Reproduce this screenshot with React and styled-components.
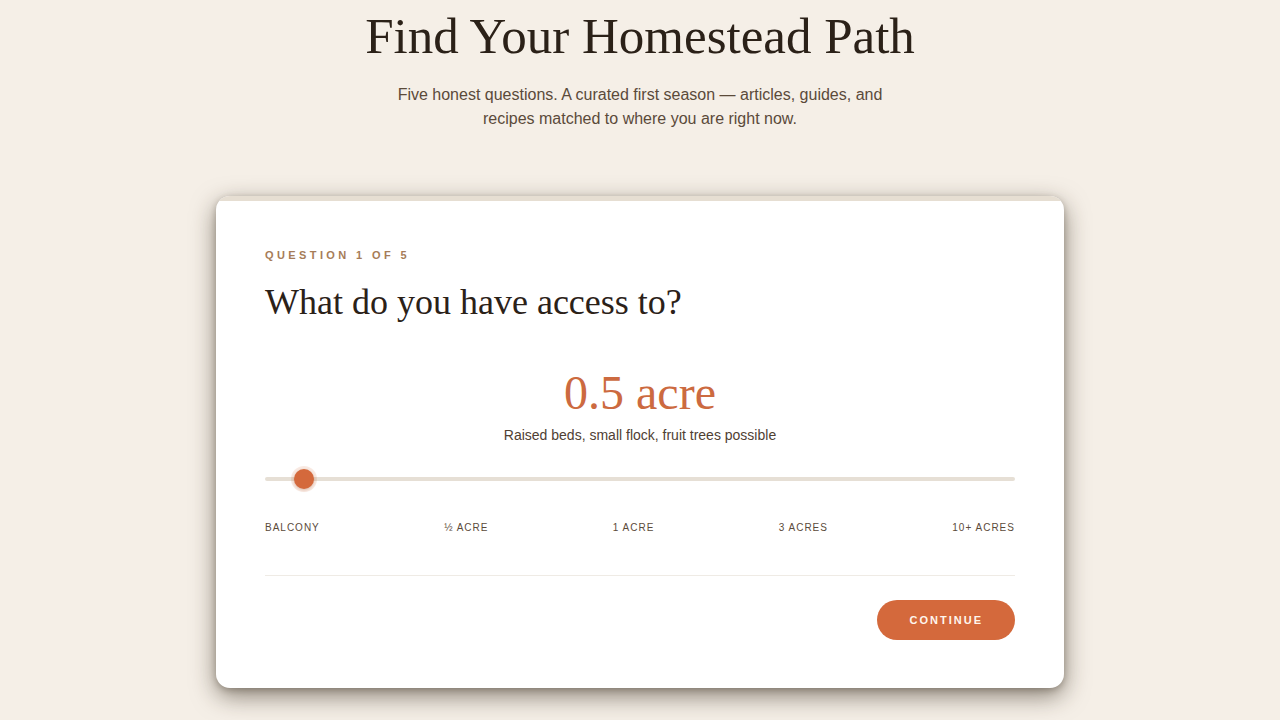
import React, { useState } from 'react';
import styled, { createGlobalStyle } from 'styled-components';

const GlobalStyle = createGlobalStyle`
  * { box-sizing: border-box; }
  body {
    margin: 0;
    background: #f5efe7;
    color: #2b231b;
    font-family: 'Liberation Sans', Arial, sans-serif;
  }
`;

const stops = ['Balcony', '½ acre', '1 acre', '3 acres', '10+ acres'];

const App = () => {
  const [value] = useState(0.052);

  return (
    <>
      <GlobalStyle />
      <Page>
        <Title>Find Your Homestead Path</Title>
        <Intro>
          Five honest questions. A curated first season — articles, guides, and recipes matched to where you
          are right now.
        </Intro>

        <Card>
          <Progress>
            <ProgressFill style={{ width: '0%' }} />
          </Progress>
          <CardBody>
            <Eyebrow>Question 1 of 5</Eyebrow>
            <Question>What do you have access to?</Question>

            <Readout>
              <Amount>0.5 acre</Amount>
              <Hint>Raised beds, small flock, fruit trees possible</Hint>
            </Readout>

            <Track>
              <Thumb style={{ left: `${value * 100}%` }} />
            </Track>

            <Stops>
              {stops.map((s) => (
                <Stop key={s}>{s}</Stop>
              ))}
            </Stops>

            <Footer>
              <ContinueButton>Continue</ContinueButton>
            </Footer>
          </CardBody>
        </Card>
      </Page>
    </>
  );
};

export default App;

const Page = styled.div`
  display: flex;
  flex-direction: column;
  align-items: center;
  padding: 6px 20px 40px;
`;

const Title = styled.h1`
  margin: 0;
  font-family: 'Liberation Serif', 'Times New Roman', serif;
  font-weight: 400;
  font-size: 51px;
  line-height: 1.2;
  color: #2b2118;
`;

const Intro = styled.p`
  margin: 16px 0 0;
  max-width: 500px;
  text-align: center;
  font-size: 16px;
  line-height: 24px;
  color: #5b4a3a;
`;

const Card = styled.section`
  margin-top: 65px;
  width: 848px;
  background: #ffffff;
  border-radius: 14px;
  overflow: hidden;
  box-shadow: 0 8px 24px rgba(50, 38, 24, 0.55), 0 2px 6px rgba(50, 38, 24, 0.25);
`;

const Progress = styled.div`
  height: 5px;
  background: #e6ded2;
`;

const ProgressFill = styled.div`
  height: 100%;
  background: #d4693c;
`;

const CardBody = styled.div`
  padding: 48px 49px 48px;
`;

const Eyebrow = styled.div`
  font-size: 11px;
  font-weight: 700;
  letter-spacing: 3.4px;
  text-transform: uppercase;
  color: #a67c58;
`;

const Question = styled.h2`
  margin: 20px 0 0;
  font-family: 'Liberation Serif', 'Times New Roman', serif;
  font-weight: 400;
  font-size: 36px;
  line-height: 1.2;
  color: #2b2118;
`;

const Readout = styled.div`
  margin-top: 43px;
  text-align: center;
`;

const Amount = styled.div`
  font-family: 'Liberation Serif', 'Times New Roman', serif;
  font-size: 48px;
  line-height: 1.1;
  color: #cc6a40;
`;

const Hint = styled.div`
  margin-top: 5px;
  font-size: 14px;
  line-height: 20px;
  color: #4f4033;
`;

const Track = styled.div`
  position: relative;
  margin-top: 32px;
  height: 4px;
  border-radius: 2px;
  background: #e6dfd5;
`;

const Thumb = styled.span`
  position: absolute;
  top: 50%;
  width: 20px;
  height: 20px;
  border-radius: 50%;
  background: #d4693c;
  transform: translate(-50%, -50%);
  box-shadow: 0 0 0 3px rgba(212, 105, 60, 0.14), 0 1px 3px rgba(140, 60, 20, 0.3);
`;

const Stops = styled.div`
  display: flex;
  justify-content: space-between;
  margin-top: 41px;
`;

const Stop = styled.span`
  font-size: 10px;
  letter-spacing: 1px;
  text-transform: uppercase;
  color: #5b4a3a;
`;

const Footer = styled.div`
  display: flex;
  justify-content: flex-end;
  margin-top: 42px;
  padding-top: 24px;
  border-top: 1px solid #efebe5;
`;

const ContinueButton = styled.button`
  height: 40px;
  padding: 0 32px 0 33px;
  border: none;
  border-radius: 20px;
  background: #d4693c;
  color: #fff6ee;
  font-family: 'Liberation Sans', Arial, sans-serif;
  font-size: 11px;
  font-weight: 700;
  letter-spacing: 2px;
  text-transform: uppercase;
  cursor: pointer;
`;
